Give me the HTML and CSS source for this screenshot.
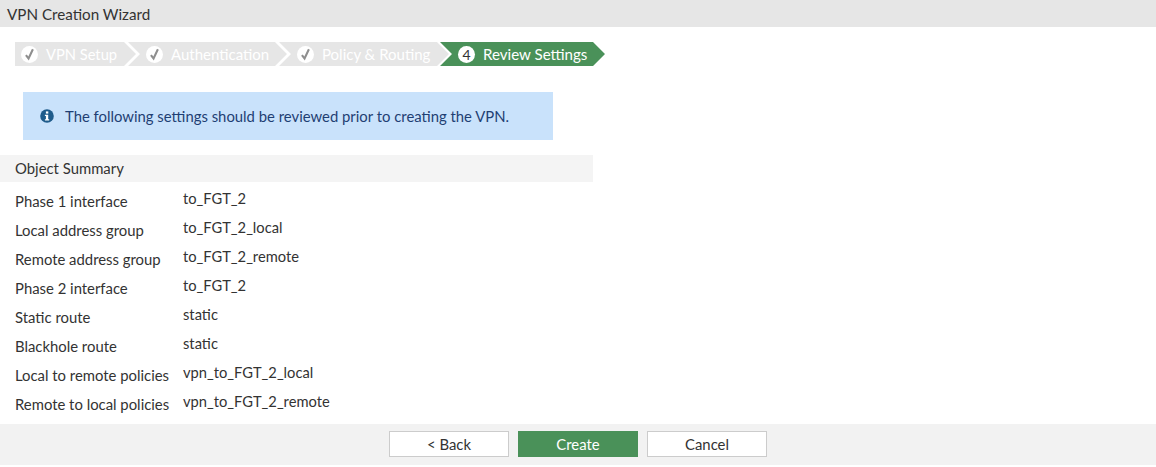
FILE: index.html
```html
<!DOCTYPE html>
<html lang="en">
<head>
<meta charset="utf-8">
<title>VPN Creation Wizard</title>
<link rel="stylesheet" href="styles.css">
</head>
<body>
<div class="page">
  <header class="title">VPN Creation Wizard</header>
  <main class="content">
    <ol class="steps">
      <li class="step step-first step-done step-w1"><svg class="badge" viewBox="0 0 18 18"><circle cx="9" cy="9" r="9" fill="#fff"/><path d="M5.2 9.6 8 13.2 12.6 3.4" fill="none" stroke="#8f8f8f" stroke-width="2.2"/></svg><span class="label-tight">VPN Setup</span></li>
      <li class="step step-done step-w2"><svg class="badge" viewBox="0 0 18 18"><circle cx="9" cy="9" r="9" fill="#fff"/><path d="M5.2 9.6 8 13.2 12.6 3.4" fill="none" stroke="#8f8f8f" stroke-width="2.2"/></svg><span>Authentication</span></li>
      <li class="step step-done step-w3"><svg class="badge" viewBox="0 0 18 18"><circle cx="9" cy="9" r="9" fill="#fff"/><path d="M5.2 9.6 8 13.2 12.6 3.4" fill="none" stroke="#8f8f8f" stroke-width="2.2"/></svg><span>Policy &amp; Routing</span></li>
      <li class="step step-current step-w4"><span class="num">4</span><span>Review Settings</span></li>
    </ol>
    <div class="notice">
      <svg class="info" viewBox="0 0 14 14"><circle cx="7" cy="7" r="6.8" fill="#1f5c8b"/><rect x="5.9" y="2.4" width="2.4" height="2.2" fill="#fff"/><path d="M4.9 5.7H8.2V10.2H9.2V11.6H4.9V10.2H5.9V7.1H4.9Z" fill="#fff"/></svg>
      <span>The following settings should be reviewed prior to creating the VPN.</span>
    </div>
    <h2 class="section">Object Summary</h2>
    <dl class="summary">
      <div class="row"><dt>Phase 1 interface</dt><dd>to_FGT_2</dd></div>
      <div class="row"><dt>Local address group</dt><dd>to_FGT_2_local</dd></div>
      <div class="row"><dt>Remote address group</dt><dd>to_FGT_2_remote</dd></div>
      <div class="row"><dt>Phase 2 interface</dt><dd>to_FGT_2</dd></div>
      <div class="row"><dt>Static route</dt><dd>static</dd></div>
      <div class="row"><dt>Blackhole route</dt><dd>static</dd></div>
      <div class="row"><dt>Local to remote policies</dt><dd>vpn_to_FGT_2_local</dd></div>
      <div class="row"><dt>Remote to local policies</dt><dd>vpn_to_FGT_2_remote</dd></div>
    </dl>
  </main>
  <footer class="actions">
    <button class="btn">&lt; Back</button>
    <button class="btn btn-primary">Create</button>
    <button class="btn">Cancel</button>
  </footer>
</div>
</body>
</html>
```

FILE: styles.css
```css
* { box-sizing: border-box; }
html, body { margin: 0; padding: 0; background: #fff; }
body { font-family: Lato, "Open Sans", sans-serif; font-size: 14.87px; color: #333; overflow: hidden; }
.page { width: 1156px; height: 467px; display: flex; flex-direction: column; }
.title { height: 27px; line-height: 29px; padding-left: 7px; background: #e6e6e6; color: #333; font-size: 15.2px; }
.content { flex: 1; display: flex; flex-direction: column; padding-top: 15px; }
.steps { list-style: none; margin: 0 0 0 15px; padding: 0; display: flex; height: 24px; }
.step { display: flex; align-items: center; height: 24px; padding-left: 18px; gap: 8px; margin-left: -8px; background: #e6e6e6; color: #fff; font-size: 15px;
  clip-path: polygon(0 0, calc(100% - 12px) 0, 100% 50%, calc(100% - 12px) 100%, 0 100%, 12px 50%); }
.step-first { margin-left: 0; padding-left: 6px; clip-path: polygon(0 0, calc(100% - 12px) 0, 100% 50%, calc(100% - 12px) 100%, 0 100%); }
.label-tight { font-size: 14.7px; }
.step-w1 { width: 121px; }
.step-w2 { width: 159px; }
.step-w3 { width: 170px; }
.step-w4 { width: 165px; margin-left: -9px; font-size: 15.1px; }
.step-current { background: #4a9159; }
.badge { width: 17px; height: 17px; flex: none; }
.num { width: 17px; height: 17px; border-radius: 50%; background: #fff; color: #333; font-size: 14px; line-height: 17px; text-align: center; flex: none; }
.notice { margin: 26px 0 0 23px; width: 530px; height: 48px; background: #c9e2fb; color: #1f3f73; display: flex; align-items: center; gap: 11px; padding-left: 17px; }
.info { width: 14px; height: 14px; flex: none; }
.section { margin: 15px 0 0; width: 593px; height: 27px; line-height: 27px; padding-left: 15px; background: #f4f4f4; font-size: 14.87px; font-weight: 400; color: #333; }
.summary { margin: 5px 0 0; padding: 0 0 0 15px; }
.row { display: flex; height: 29px; }
.row dt { width: 168px; line-height: 29px; }
.row dd { margin: 0; line-height: 23px; font-size: 14.7px; }
.actions { height: 41px; margin-bottom: 2px; background: #f2f2f2; display: flex; justify-content: center; gap: 9px; padding-top: 7px; }
.btn { width: 120px; height: 26px; padding: 0; border: 1px solid #ccc; background: #fff; color: #333; font: inherit; }
.btn-primary { background: #4a9159; border-color: #4a9159; color: #fff; }
```
